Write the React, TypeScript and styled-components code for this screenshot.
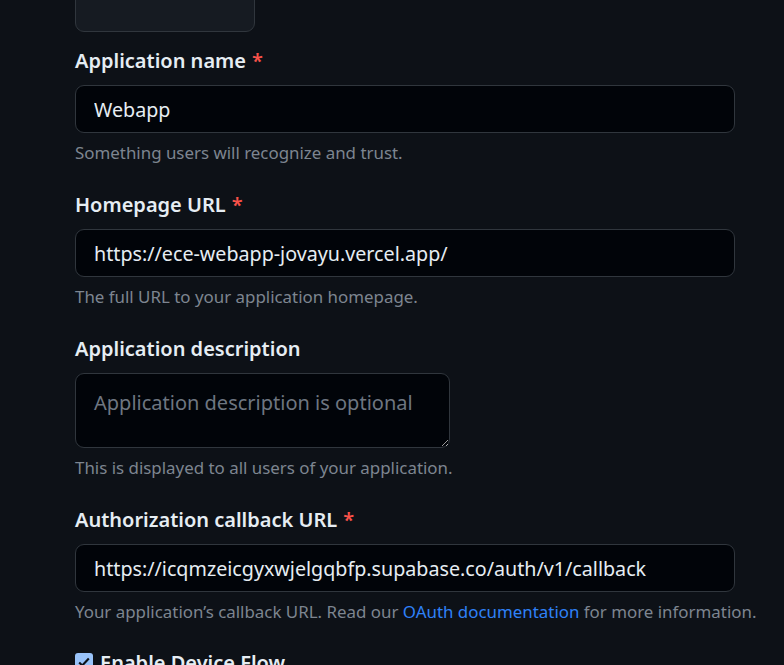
import React from "react";
import styled, { createGlobalStyle } from "styled-components";

const Global = createGlobalStyle`
  html, body {
    margin: 0;
    padding: 0;
    background: #0d1117;
    overflow: hidden;
  }
  body {
    font-family: "Noto Sans", "Open Sans", "Liberation Sans", sans-serif;
    color: #e6edf3;
  }
`;

const Page = styled.div`
  padding: 0 0 0 75px;
  height: 665px;
  overflow: hidden;
`;

const LogoBox = styled.div`
  width: 178px;
  height: 90px;
  margin-top: -60px;
  background: #161b22;
  border: 1px solid #30363d;
  border-radius: 9px;
`;

const Form = styled.form`
  display: flex;
  flex-direction: column;
  gap: 25px;
  margin-top: 14px;
  width: 660px;
`;

const Group = styled.div`
  display: flex;
  flex-direction: column;
`;

const Label = styled.label`
  font-size: 20px;
  line-height: 30px;
  font-weight: 600;
  color: #e6edf3;
  margin-bottom: 9px;
`;

const Req = styled.span`
  color: #f85149;
  margin-left: 6px;
`;

const Input = styled.input`
  box-sizing: border-box;
  height: 48px;
  width: 660px;
  padding: 0 18px;
  font-family: inherit;
  font-size: 19.7px;
  color: #e6edf3;
  background: #010409;
  border: 1px solid #30363d;
  border-radius: 9px;
  outline: none;
`;

const TextArea = styled.textarea`
  box-sizing: border-box;
  height: 75px;
  width: 375px;
  padding: 14px 18px 10px;
  font-family: inherit;
  font-size: 20px;
  line-height: 30px;
  color: #e6edf3;
  background: #010409;
  border: 1px solid #30363d;
  border-radius: 9px;
  outline: none;
  resize: vertical;
  &::placeholder {
    color: #6e7681;
  }
`;

const Note = styled.p`
  margin: 8px 0 0;
  font-size: 16.9px;
  line-height: 24px;
  color: #7d8590;
  white-space: nowrap;
`;

const Link = styled.a`
  color: #2f81f7;
  text-decoration: none;
`;

const CheckRow = styled.div`
  display: flex;
  align-items: flex-start;
  gap: 7px;
  margin-top: -1px;
`;

const Box = styled.span`
  width: 18px;
  height: 18px;
  margin-top: 5px;
  border-radius: 3px;
  background: #99c3f9;
  display: flex;
  align-items: center;
  justify-content: center;
`;

const CheckLabel = styled.span`
  font-size: 20px;
  line-height: 30px;
  font-weight: 600;
  color: #e6edf3;
`;

export default function App() {
  return (
    <>
      <Global />
      <Page>
        <LogoBox />
        <Form>
          <Group>
            <Label>
              Application name<Req>*</Req>
            </Label>
            <Input defaultValue="Webapp" />
            <Note>Something users will recognize and trust.</Note>
          </Group>
          <Group>
            <Label>
              Homepage URL<Req>*</Req>
            </Label>
            <Input defaultValue="https://ece-webapp-jovayu.vercel.app/" />
            <Note>The full URL to your application homepage.</Note>
          </Group>
          <Group>
            <Label>Application description</Label>
            <TextArea placeholder="Application description is optional" />
            <Note>This is displayed to all users of your application.</Note>
          </Group>
          <Group>
            <Label>
              Authorization callback URL<Req>*</Req>
            </Label>
            <Input defaultValue="https://icqmzeicgyxwjelgqbfp.supabase.co/auth/v1/callback" />
            <Note>
              Your application’s callback URL. Read our{" "}
              <Link href="#">OAuth documentation</Link> for more information.
            </Note>
          </Group>
          <CheckRow>
            <Box>
              <svg width="14" height="14" viewBox="0 0 16 16">
                <path
                  d="M2.5 8.5 L6 12 L13.5 4"
                  fill="none"
                  stroke="#0d1117"
                  strokeWidth="2.4"
                />
              </svg>
            </Box>
            <CheckLabel>Enable Device Flow</CheckLabel>
          </CheckRow>
        </Form>
      </Page>
    </>
  );
}
